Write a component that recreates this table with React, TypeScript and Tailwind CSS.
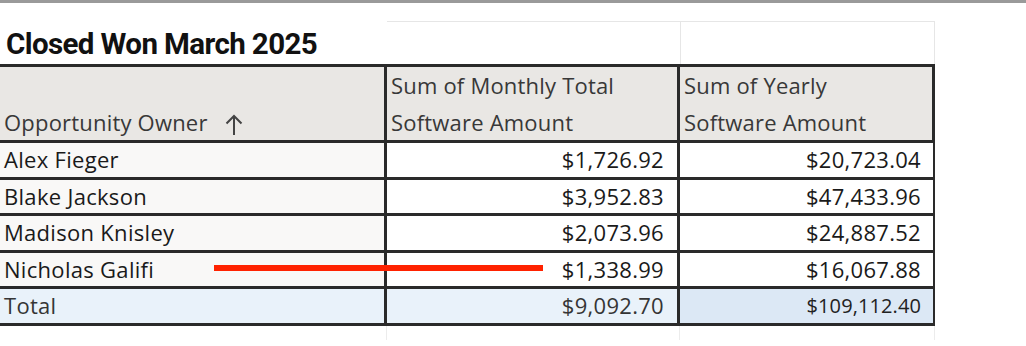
import React from "react";

const rows = [
  { name: "Alex Fieger", monthly: "$1,726.92", yearly: "$20,723.04", h: "h-[37px]" },
  { name: "Blake Jackson", monthly: "$3,952.83", yearly: "$47,433.96", h: "h-[36px]" },
  { name: "Madison Knisley", monthly: "$2,073.96", yearly: "$24,887.52", h: "h-[37px]" },
  { name: "Nicholas Galifi", monthly: "$1,338.99", yearly: "$16,067.88", h: "h-[36px]", marked: true },
];

const cols = "grid grid-cols-[387px_293px_253px]";

function SortUp() {
  return (
    <svg width="20" height="22" viewBox="0 0 20 22" fill="none" stroke="#444" strokeWidth="2" className="ml-[16px] mb-[5px]">
      <path d="M10 21V2" />
      <path d="M2.5 9.5L10 2l7.5 7.5" />
    </svg>
  );
}

export default function App() {
  return (
    <div className="w-[1026px] h-[346px] bg-white overflow-hidden font-['Open_Sans',sans-serif] text-[#1a1a1a]">
      <div className="h-[3px] bg-[#9a9a9a]" />
      <div className="relative w-[935px]">
        {/* faint sheet gridlines above the table */}
        <div className="h-[61px] grid grid-cols-[387px_293px_255px]">
          <div className="flex items-end pb-[5px] pl-[6px]">
            <h1 className="font-['Roboto',sans-serif] font-bold text-[29.5px] leading-none tracking-[-0.6px] text-[#111] whitespace-nowrap">
              Closed Won March 2025
            </h1>
          </div>
          <div className="border-t border-[#e6e6e6] mt-[18px]" />
          <div className="border-t border-l border-r border-[#e6e6e6] mt-[18px]" />
        </div>

        <div className="border-t-[3px] border-b-[3px] border-r-[3px] border-[#2a2a2a] w-[935px]">
          <div className={`${cols} bg-[#e9e7e4] text-[#383838] text-[22px] tracking-[0.2px] leading-[37px] h-[73px]`}>
            <div className="flex items-end pl-[4px] border-r-[3px] border-[#2a2a2a]">
              <span>Opportunity Owner</span>
              <SortUp />
            </div>
            <div className="pl-[4px] border-r-[3px] border-[#2a2a2a]">
              <div>Sum of Monthly Total</div>
              <div>Software Amount</div>
            </div>
            <div className="pl-[4px]">
              <div>Sum of Yearly</div>
              <div>Software Amount</div>
            </div>
          </div>

          {rows.map((r) => (
            <div key={r.name} className={`${cols} ${r.h} border-t-[3px] border-[#2a2a2a] text-[22px] tracking-[0.3px] leading-[33px]`}>
              <div className="relative bg-[#f9f8f7] pl-[4px] border-r-[3px] border-[#2a2a2a]">
                {r.name}
                {r.marked && (
                  <div className="absolute left-[214px] right-[-159px] top-[12px] h-[6px] bg-[#ff2200]" />
                )}
              </div>
              <div className="bg-white text-right pr-[13px] border-r-[3px] border-[#2a2a2a]">{r.monthly}</div>
              <div className="bg-white text-right pr-[12px]">{r.yearly}</div>
            </div>
          ))}

          <div className={`${cols} h-[37px] border-t-[3px] border-[#2a2a2a] text-[22px] tracking-[0.3px] leading-[33px] text-[#353535]`}>
            <div className="bg-[#e9f2fa] pl-[4px] border-r-[3px] border-[#2a2a2a]">Total</div>
            <div className="bg-[#e9f2fa] text-right pr-[13px] border-r-[3px] border-[#2a2a2a]">$9,092.70</div>
            <div className="bg-[#dce8f5] text-right pr-[12px] text-[20px] tracking-[0.1px] text-[#222]">$109,112.40</div>
          </div>
        </div>

        <div className="h-[14px] grid grid-cols-[387px_293px_255px]">
          <div className="border-r border-[#ececec]" />
          <div className="border-r border-[#ececec]" />
          <div className="border-r border-[#ececec]" />
        </div>
      </div>
    </div>
  );
}
